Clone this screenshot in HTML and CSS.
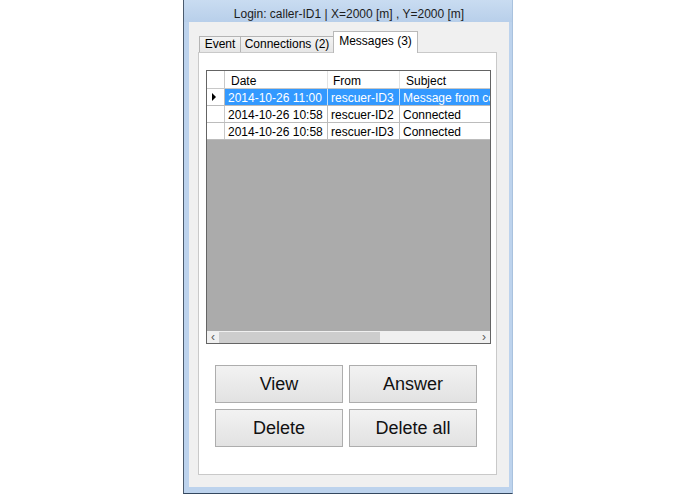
FILE: index.html
```html
<!DOCTYPE html>
<html>
<head>
<meta charset="utf-8">
<link rel="stylesheet" href="styles.css">
</head>
<body>
<div class="page">
  <div class="window">
    <div class="titlebar">Login: caller-ID1 | X=2000 [m] , Y=2000 [m]</div>
    <div class="client">
      <div class="tabs">
        <div class="tab tab-event">Event</div>
        <div class="tab tab-conn">Connections (2)</div>
        <div class="tab tab-msg active">Messages (3)</div>
      </div>
      <div class="tabpage">
        <div class="grid">
          <div class="row head">
            <div class="cell rh"></div>
            <div class="cell c-date">Date</div>
            <div class="cell c-from">From</div>
            <div class="cell c-subj">Subject</div>
          </div>
          <div class="row selected">
            <div class="cell rh"><span class="arrow"></span></div>
            <div class="cell c-date">2014-10-26 11:00</div>
            <div class="cell c-from">rescuer-ID3</div>
            <div class="cell c-subj">Message from co</div>
          </div>
          <div class="row">
            <div class="cell rh"></div>
            <div class="cell c-date">2014-10-26 10:58</div>
            <div class="cell c-from">rescuer-ID2</div>
            <div class="cell c-subj">Connected</div>
          </div>
          <div class="row">
            <div class="cell rh"></div>
            <div class="cell c-date">2014-10-26 10:58</div>
            <div class="cell c-from">rescuer-ID3</div>
            <div class="cell c-subj">Connected</div>
          </div>
          <div class="empty"></div>
          <div class="hscroll">
            <span class="sarrow">&#8249;</span>
            <div class="track"><div class="thumb"></div></div>
            <span class="sarrow">&#8250;</span>
          </div>
        </div>
        <div class="buttons">
          <div class="btn">View</div>
          <div class="btn">Answer</div>
          <div class="btn">Delete</div>
          <div class="btn">Delete all</div>
        </div>
      </div>
    </div>
  </div>
</div>
</body>
</html>
```

FILE: styles.css
```css
html, body {
  margin: 0;
  padding: 0;
  background: #ffffff;
}
.page {
  width: 695px;
  height: 494px;
  display: flex;
  font-family: "Liberation Sans", Arial, sans-serif;
  color: #000;
}
.window {
  margin-left: 183px;
  width: 330px;
  height: 494px;
  box-sizing: border-box;
  border-left: 1px solid #4b5b6e;
  border-right: 1px solid #a9c2de;
  border-bottom: 1px solid #33475e;
  background: #bdd3ed;
  padding: 0 3px 6px 5px;
  display: flex;
  flex-direction: column;
}
.titlebar {
  height: 22px;
  box-sizing: border-box;
  padding-top: 7px;
  line-height: 14px;
  font-size: 12px;
  text-align: center;
  color: #1c1c1c;
  background: linear-gradient(#c9dcf1, #b8cfea);
  margin: 0 -3px 0 -5px;
  padding-left: 2px;
}
.client {
  flex: 1;
  background: #f0f0f0;
  padding-left: 9px;
  display: flex;
  flex-direction: column;
}
.tabs {
  margin-top: 9px;
  height: 21px;
  display: flex;
  align-items: flex-end;
  padding-left: 1px;
  position: relative;
  z-index: 1;
}
.tab {
  box-sizing: border-box;
  height: 16px;
  border: 1px solid #b4b4b4;
  border-bottom: none;
  background: linear-gradient(#f3f3f3, #e6e6e6);
  font-size: 12px;
  line-height: 14px;
  text-align: center;
  white-space: nowrap;
}
.tab + .tab {
  margin-left: -1px;
}
.tab-event { width: 42px; }
.tab-conn { width: 94px; }
.tab-msg { width: 85px; }
.tab.active {
  height: 22px;
  margin-bottom: -1px;
  background: #ffffff;
  line-height: 18px;
  border-color: #b9b9b9;
}
.tabpage {
  width: 299px;
  height: 423px;
  box-sizing: border-box;
  border: 1px solid #c9c9c9;
  background: #ffffff;
  padding: 17px 0 0 7px;
}
.grid {
  width: 285px;
  height: 274px;
  box-sizing: border-box;
  border: 1px solid #646464;
  display: flex;
  flex-direction: column;
  font-size: 12px;
  background: #ffffff;
}
.row {
  display: grid;
  grid-template-columns: 18px 103px 72px 90px;
  height: 17px;
  box-sizing: border-box;
  border-bottom: 1px solid #bcbcbc;
}
.row.head {
  height: 18px;
  border-bottom: 1px solid #c8c8c8;
}
.cell {
  box-sizing: border-box;
  border-right: 1px solid #bcbcbc;
  white-space: nowrap;
  overflow: hidden;
  line-height: 18px;
  padding-left: 3px;
}
.head .cell {
  border-right-color: #e3e3e3;
  line-height: 20px;
  padding-left: 6px;
}
.head .c-from { padding-left: 5px; }
.cell.c-subj {
  border-right: none;
}
.cell.rh {
  padding: 0;
  background: #ffffff;
  border-right-color: #c8c8c8;
  display: flex;
  align-items: center;
  justify-content: center;
}
.selected .cell {
  background: #3399ff;
  color: #ffffff;
  border-right-color: #c9e2fb;
}
.selected .cell.rh {
  background: #ffffff;
  border-right-color: #bcbcbc;
}
.arrow {
  width: 0;
  height: 0;
  border-left: 4px solid #000;
  border-top: 4px solid transparent;
  border-bottom: 4px solid transparent;
  margin-left: -4px;
}
.empty {
  flex: 1;
  background: #ababab;
}
.hscroll {
  height: 12px;
  background: #f0f0f0;
  display: flex;
  align-items: center;
}
.sarrow {
  width: 12px;
  text-align: center;
  font-size: 12px;
  line-height: 12px;
  color: #5a5a5a;
}
.track {
  flex: 1;
  height: 12px;
  display: flex;
  align-items: center;
}
.thumb {
  width: 161px;
  height: 11px;
  background: #cdcdcd;
}
.buttons {
  margin: 21px 0 0 9px;
  display: grid;
  grid-template-columns: 128px 128px;
  grid-auto-rows: 38px;
  column-gap: 6px;
  row-gap: 6px;
}
.btn {
  box-sizing: border-box;
  border: 1px solid #adadad;
  background: linear-gradient(#f2f2f2, #e2e2e2);
  font-size: 18px;
  line-height: 36px;
  text-align: center;
  color: #111;
}
```
